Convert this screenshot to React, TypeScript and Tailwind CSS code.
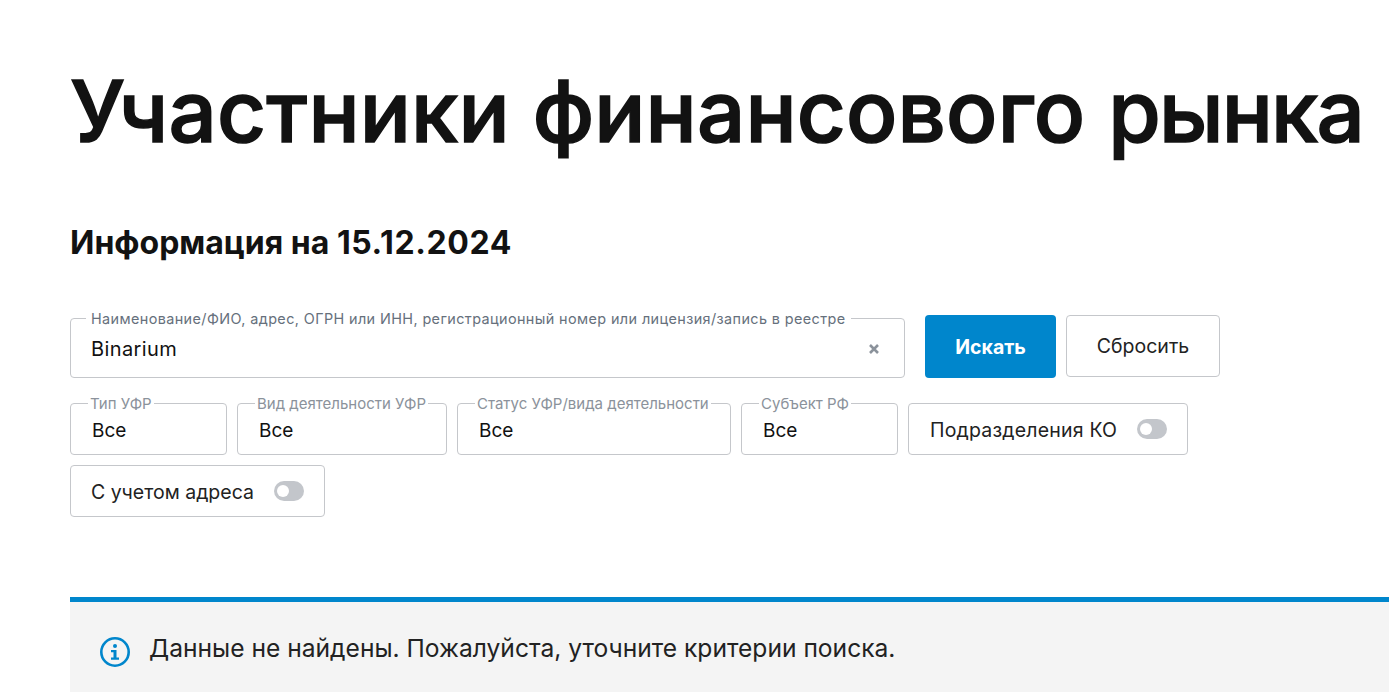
import React from 'react';

const font = "font-['Inter','Noto_Sans',sans-serif]";

const Legend = ({text, dark}: {text: string; dark?: boolean}) => (
  <span className={`absolute top-[-9px] bg-white leading-[17px] whitespace-nowrap ${dark ? "left-[15px] px-[5px] text-[14.4px] text-[#66707c]" : "left-[17px] px-[2px] text-[15px] text-[#8b929b]"}`}>
    {text}
  </span>
);

const SelectField = ({label, width}: {label: string; width: string}) => (
  <div className={`relative h-[52px] rounded-[4px] border border-[#c5c7cb] pl-[21px] pt-[15px] text-[19px] leading-[24px] text-[#111] ${width}`}>
    <Legend text={label} />
    Все
  </div>
);

const ToggleField = ({label, width, wide}: {label: string; width: string; wide?: boolean}) => (
  <div className={`flex h-[52px] items-center justify-between rounded-[4px] border border-[#c5c7cb] pr-[20px] text-[19.5px] text-[#222] ${wide ? "pl-[21px] tracking-[0.01em]" : "pl-[20px]"} ${width}`}>
    <span className="pt-[3px]">{label}</span>
    <span className="flex h-[20px] w-[30px] items-center rounded-full bg-[#c3c6cb] pl-[3px]">
      <span className="h-[12px] w-[12px] rounded-full bg-white" />
    </span>
  </div>
);

export default function App() {
  return (
    <div className={`${font} h-[694px] overflow-hidden bg-white pl-[70px] pt-[62px]`}>
      <h1 className="whitespace-nowrap text-[85px] font-medium leading-[100px] tracking-[0.2px] text-[#121212] [-webkit-text-stroke:1.5px_#121212]">
        Участники финансового <span className="tracking-[-1.8px]">рынка</span>
      </h1>

      <h2 className="mt-[63px] text-[32px] font-bold leading-[36px] text-[#121212]">
        Информация на <span className="tracking-[0.6px]">15.12.2024</span>
      </h2>

      <div className="mt-[57px] flex items-start gap-[10px]">
        <div className="relative mr-[10px] flex h-[60px] w-[835px] items-center justify-between rounded-[4px] border border-[#c5c7cb] pl-[20px] pr-[25px] pt-[2px] text-[20px] tracking-[0.02em] text-[#111]">
          <Legend text="Наименование/ФИО, адрес, ОГРН или ИНН, регистрационный номер или лицензия/запись в реестре" dark />
          <span>Binarium</span>
          <svg width="10" height="10" viewBox="0 0 10 10" className="text-[#8b929b]">
            <path d="M1 1L9 9M9 1L1 9" stroke="currentColor" strokeWidth="2.6" />
          </svg>
        </div>
        <button className="-mt-[3px] h-[63px] w-[131px] rounded-[4px] bg-[#0086cc] pt-[2px] text-[19.5px] font-bold text-white">
          Искать
        </button>
        <button className="-mt-[3px] h-[62px] w-[154px] rounded-[4px] border border-[#c5c7cb] bg-white pt-[2px] text-[19.5px] text-[#222]">
          Сбросить
        </button>
      </div>

      <div className="mt-[25px] flex gap-[10px]">
        <SelectField label="Тип УФР" width="w-[157px]" />
        <SelectField label="Вид деятельности УФР" width="w-[210px]" />
        <SelectField label="Статус УФР/вида деятельности" width="w-[274px]" />
        <SelectField label="Субъект РФ" width="w-[157px]" />
        <ToggleField label="Подразделения КО" width="w-[280px]" wide />
      </div>

      <div className="mt-[10px]">
        <ToggleField label="С учетом адреса" width="w-[255px]" />
      </div>

      <div className="mt-[80px] flex h-[95px] items-center gap-[19px] border-t-[5px] border-[#0086cc] bg-[#f4f4f4] pl-[30px] text-[24.6px] text-[#222]">
        <svg width="30" height="30" viewBox="0 0 30 30" fill="none" className="mt-[10px] text-[#0086cc]">
          <circle cx="15" cy="15" r="13.7" stroke="currentColor" strokeWidth="2.6" />
          <circle cx="15" cy="9" r="2" fill="currentColor" />
          <path d="M11 13H16.5V20.5H19V22.8H11V20.5H13.5V15.3H11Z" fill="currentColor" />
        </svg>
        <span className="mt-[2px]">Данные не найдены. Пожалуйста, уточните критерии поиска.</span>
      </div>
    </div>
  );
}
